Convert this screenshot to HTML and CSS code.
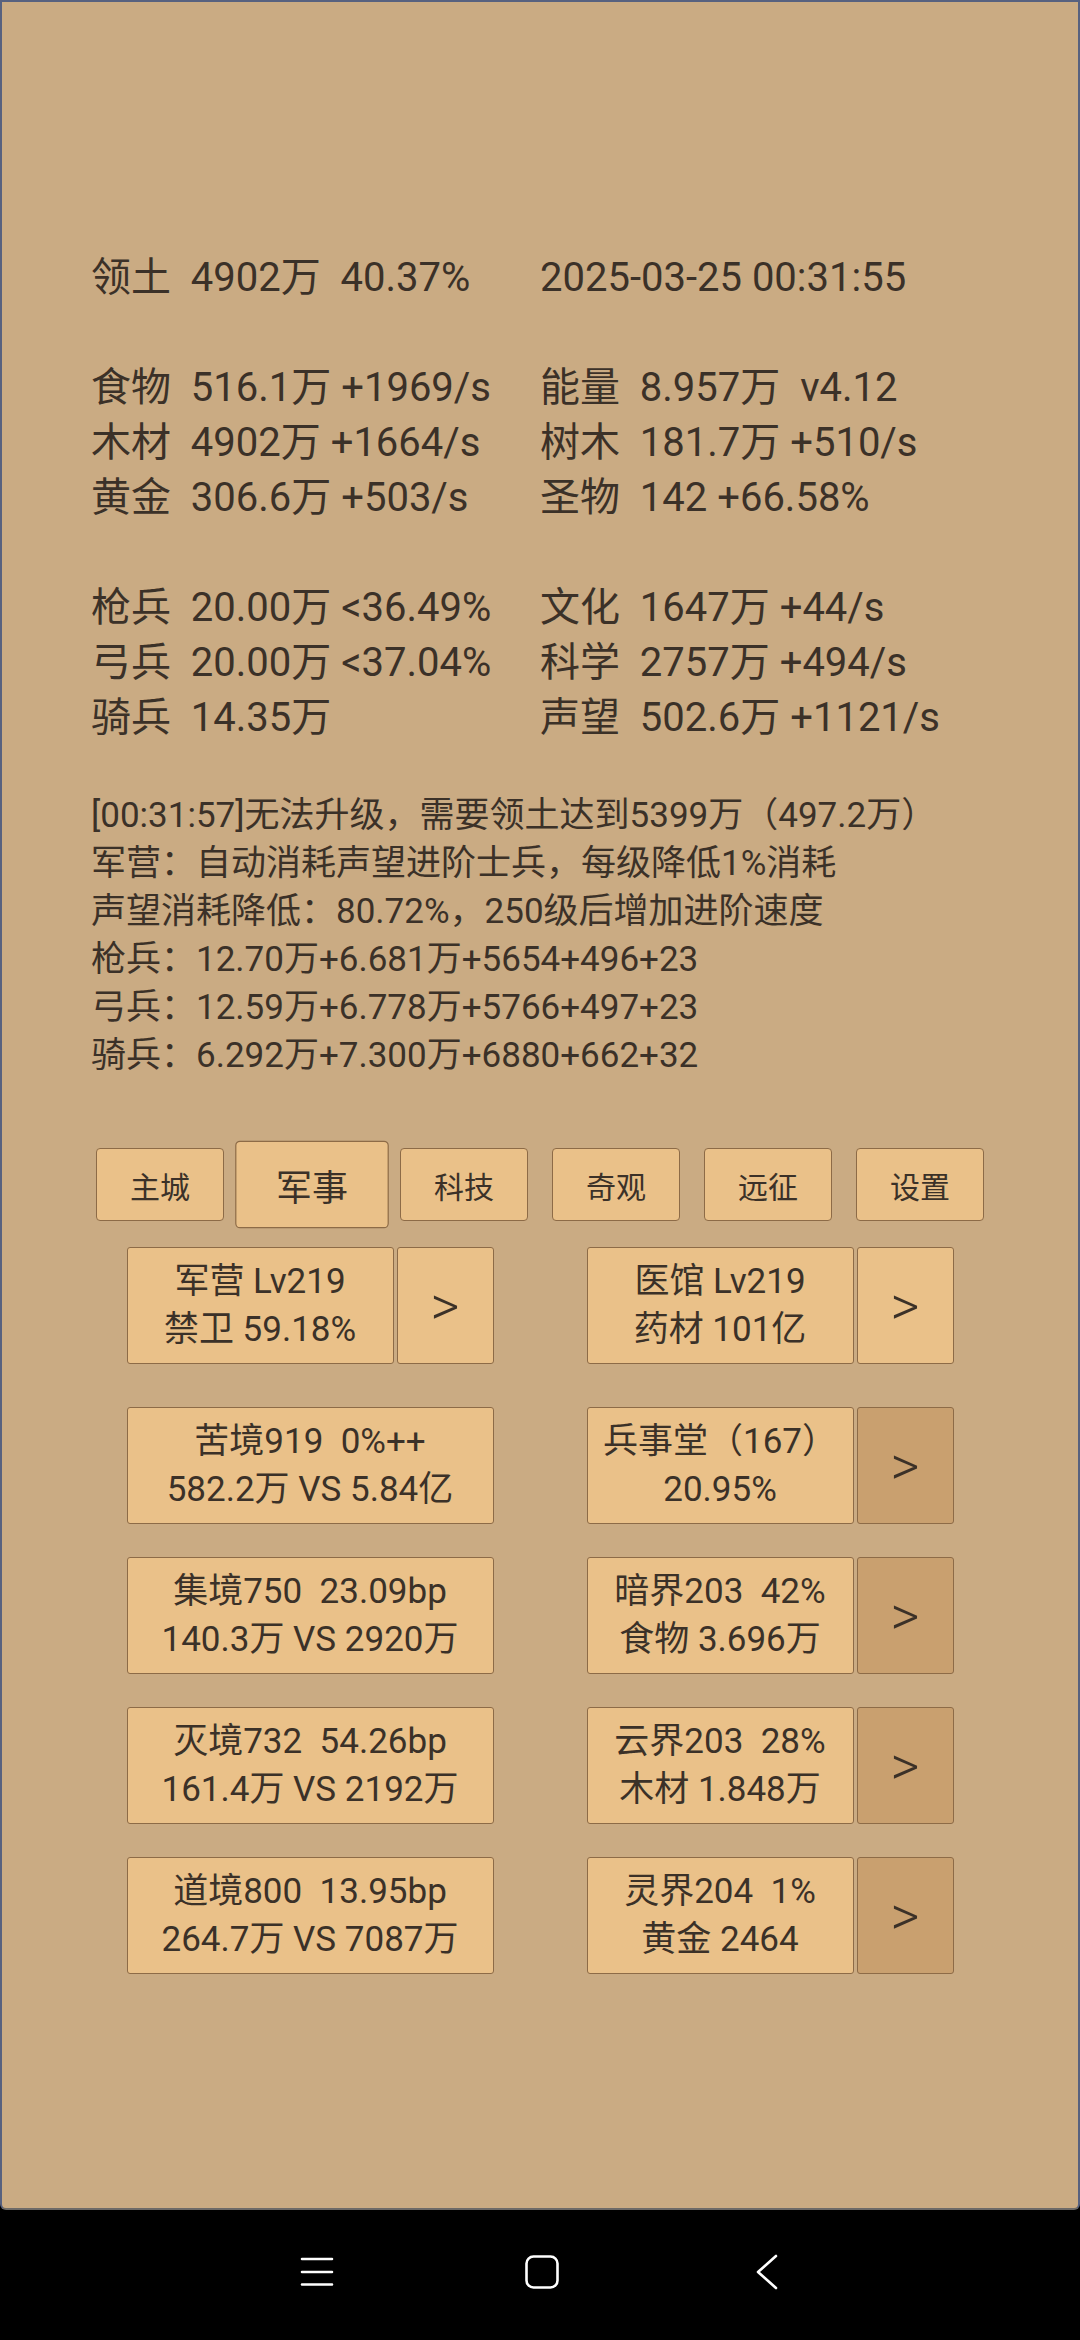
FILE: index.html
```html
<!DOCTYPE html>
<html lang="zh-CN">
<head>
  <meta charset="UTF-8">
  <meta name="viewport" content="width=device-width, initial-scale=1.0">
  <title>领土</title>
  <link rel="stylesheet" href="styles.css">
</head>
<body>
  <div class="app">
    <section class="stats">
      <div>领土  4902万  40.37%</div>
      <div>2025-03-25 00:31:55</div>
      <div></div><div></div>
      <div>食物  516.1万 +1969/s</div>
      <div>能量  8.957万  v4.12</div>
      <div>木材  4902万 +1664/s</div>
      <div>树木  181.7万 +510/s</div>
      <div>黄金  306.6万 +503/s</div>
      <div>圣物  142 +66.58%</div>
      <div></div><div></div>
      <div>枪兵  20.00万 &lt;36.49%</div>
      <div>文化  1647万 +44/s</div>
      <div>弓兵  20.00万 &lt;37.04%</div>
      <div>科学  2757万 +494/s</div>
      <div>骑兵  14.35万</div>
      <div>声望  502.6万 +1121/s</div>
    </section>

    <section class="log">
      <p>[00:31:57]无法升级，需要领土达到5399万（497.2万）</p>
      <p>军营：自动消耗声望进阶士兵，每级降低1%消耗</p>
      <p>声望消耗降低：80.72%，250级后增加进阶速度</p>
      <p>枪兵：12.70万+6.681万+5654+496+23</p>
      <p>弓兵：12.59万+6.778万+5766+497+23</p>
      <p>骑兵：6.292万+7.300万+6880+662+32</p>
    </section>

    <nav class="tabs">
      <button class="tab">主城</button>
      <button class="tab active">军事</button>
      <button class="tab">科技</button>
      <button class="tab">奇观</button>
      <button class="tab">远征</button>
      <button class="tab">设置</button>
    </nav>

    <section class="panel">
      <div class="item first">
        <button class="card"><span>军营 Lv219</span><span>禁卫 59.18%</span></button>
        <button class="more">&gt;</button>
      </div>
      <div class="item first">
        <button class="card"><span>医馆 Lv219</span><span>药材 101亿</span></button>
        <button class="more">&gt;</button>
      </div>

      <div class="item">
        <button class="card"><span>苦境919  0%++</span><span>582.2万 VS 5.84亿</span></button>
      </div>
      <div class="item">
        <button class="card"><span>兵事堂（167）</span><span>20.95%</span></button>
        <button class="more dark">&gt;</button>
      </div>

      <div class="item">
        <button class="card"><span>集境750  23.09bp</span><span>140.3万 VS 2920万</span></button>
      </div>
      <div class="item">
        <button class="card"><span>暗界203  42%</span><span>食物 3.696万</span></button>
        <button class="more dark">&gt;</button>
      </div>

      <div class="item">
        <button class="card"><span>灭境732  54.26bp</span><span>161.4万 VS 2192万</span></button>
      </div>
      <div class="item">
        <button class="card"><span>云界203  28%</span><span>木材 1.848万</span></button>
        <button class="more dark">&gt;</button>
      </div>

      <div class="item">
        <button class="card"><span>道境800  13.95bp</span><span>264.7万 VS 7087万</span></button>
      </div>
      <div class="item">
        <button class="card"><span>灵界204  1%</span><span>黄金 2464</span></button>
        <button class="more dark">&gt;</button>
      </div>
    </section>
  </div>

  <div class="sysbar">
    <svg viewBox="0 0 60 40"><path d="M15 7h30M15 20h30M15 32.5h30"/></svg>
    <svg viewBox="0 0 60 40"><rect x="14.5" y="4.5" width="31" height="31" rx="7"/></svg>
    <svg viewBox="0 0 60 40"><path d="M39 4L21 20L39 36"/></svg>
  </div>
</body>
</html>
```

FILE: styles.css
```css
body {
  margin: 0;
  background: #000;
  font-family: Roboto, "Noto Sans CJK SC", sans-serif;
  color: #3b3128;
}
.app {
  height: 2210px;
  box-sizing: border-box;
  background: #caab83;
  border: 2px solid #57617f;
  border-bottom-color: #6d6a67;
  border-radius: 0 0 6px 6px;
  padding-top: 248px;
}
.stats {
  display: grid;
  grid-template-columns: 449px auto;
  grid-auto-rows: 55px;
  padding-left: 89px;
  font-size: 40px;
  line-height: 55px;
  white-space: pre;
}
.log {
  margin-top: 47px;
  padding-left: 89px;
  font-size: 35px;
  line-height: 48px;
}
.log p {
  margin: 0;
  white-space: pre;
}
.tabs {
  display: grid;
  grid-template-columns: repeat(6, 152px);
  margin-top: 68px;
  padding-left: 82px;
}
.tab {
  justify-self: center;
  width: 128px;
  height: 73px;
  padding: 0;
  background: #eac189;
  border: 1px solid #8d6b47;
  border-radius: 4px;
  font-family: inherit;
  font-size: 30px;
  color: inherit;
}
.tab.active {
  transform: scale(1.2);
}
.panel {
  display: grid;
  grid-template-columns: 367px 367px;
  column-gap: 93px;
  row-gap: 33px;
  justify-content: center;
  margin-top: 26px;
}
.item {
  display: flex;
  gap: 3px;
  height: 117px;
}
.item.first {
  margin-bottom: 10px;
}
.card, .more {
  padding: 0;
  background: #eac189;
  border: 1px solid #8d6b47;
  border-radius: 3px;
  font-family: inherit;
  color: inherit;
}
.card {
  flex: 1;
  display: flex;
  flex-direction: column;
  justify-content: center;
  align-items: center;
  font-size: 35px;
  line-height: 48px;
  white-space: pre;
}
.more {
  width: 97px;
  font-size: 56px;
  font-weight: 300;
}
.more.dark {
  background: #c9a06f;
}
.sysbar {
  display: flex;
  align-items: center;
  gap: 165px;
  height: 130px;
  box-sizing: border-box;
  padding: 0 0 6px 287px;
}
.sysbar svg {
  width: 60px;
  height: 40px;
  fill: none;
  stroke: #fff;
  stroke-width: 2.6;
  stroke-linecap: round;
  stroke-linejoin: round;
}
```
